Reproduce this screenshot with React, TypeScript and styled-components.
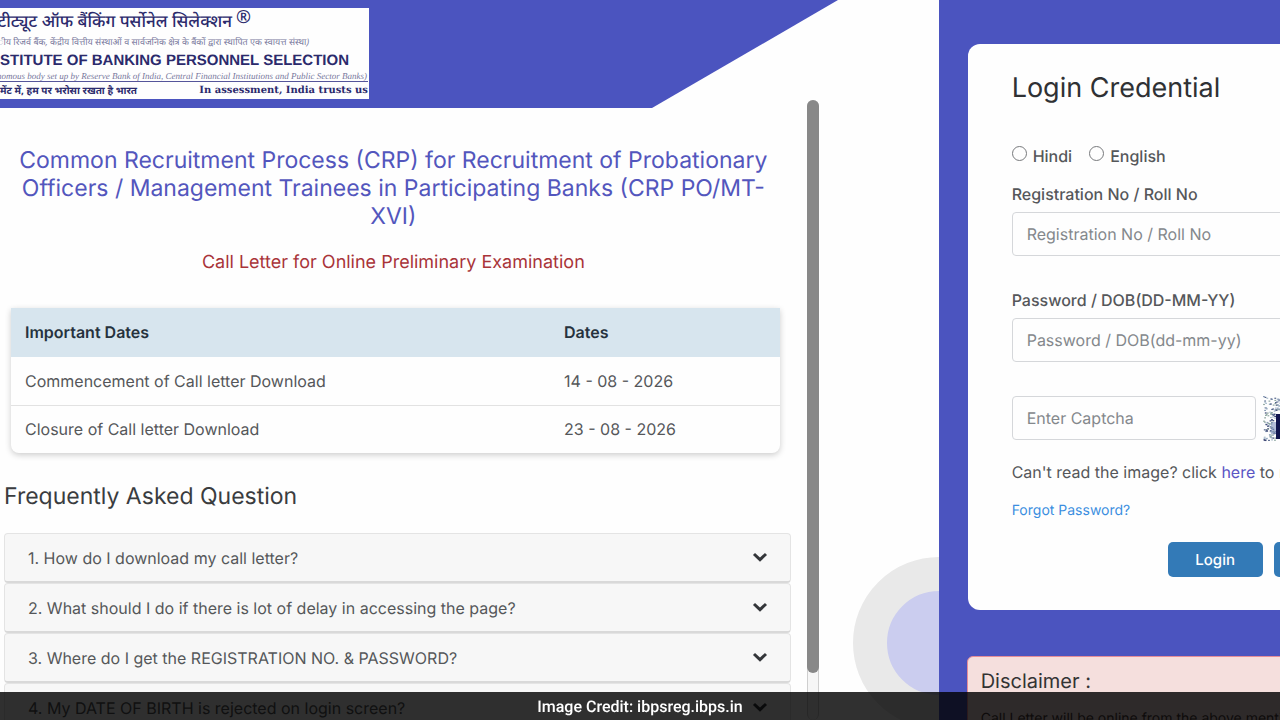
import React from "react";
import styled, { createGlobalStyle } from "styled-components";

const GlobalStyle = createGlobalStyle`
  *, *::before, *::after { box-sizing: border-box; }
  html, body, #root { height: 100%; }
  body {
    margin: 0;
    overflow: hidden;
    background: #fefefe;
    color: #55575a;
    font-family: Inter, "Liberation Sans", sans-serif;
    font-size: 16px;
    line-height: 20px;
    text-rendering: geometricPrecision;
  }
  h1, h2, h3, p { margin: 0; font-weight: 400; }
  button, input { text-rendering: inherit; }
`;

const Page = styled.div`
  display: grid;
  grid-template-columns: minmax(0, 11fr) minmax(0, 4fr);
  height: 100vh;
  overflow: hidden;
`;

const InfoColumn = styled.div`
  position: relative;
  display: flex;
  flex-direction: column;
  overflow: hidden;
`;

const Banner = styled.header`
  flex: none;
  height: 108px;
  padding-top: 8px;
  background: #4b54bf;
  clip-path: polygon(0 0, 838px 0, 652px 100%, 0 100%);
`;

const Logo = styled.div`
  display: flex;
  flex-direction: column;
  align-items: flex-end;
  width: 369px;
  height: 91px;
  overflow: hidden;
  background: #fefefe;
  color: #2b2a6c;
  white-space: nowrap;
`;

const LogoHindiName = styled.div`
  padding-right: 118px;
  font: 500 17px/25px "Noto Sans", "Noto Sans Devanagari", sans-serif;

  sup {
    margin-left: 4px;
    font-size: 18px;
    line-height: 0;
    vertical-align: 4px;
  }
`;

const LogoHindiNote = styled.div`
  padding-right: 60px;
  color: #77779c;
  font: italic 400 9px/17px "Noto Sans", "Noto Sans Devanagari", sans-serif;
`;

const LogoName = styled.div`
  padding-right: 20px;
  font: 700 15px/21px "Liberation Sans", sans-serif;
`;

const LogoNote = styled.div`
  padding-right: 2px;
  color: #77779c;
  font: italic 400 9px/10px "Liberation Serif", serif;
`;

const LogoMotto = styled.div`
  display: flex;
  align-self: stretch;
  justify-content: space-between;
  margin-right: 1px;
  border-top: 1px solid #55559a;
  font: 700 10px/17px "DejaVu Serif", serif;

  span { border-bottom: 1px solid #4b54bf; }
  span:first-child { font: 700 10px/17px "Noto Sans", "Noto Sans Devanagari", sans-serif; }
`;

const InfoBody = styled.div`
  display: flex;
  flex: 1;
  min-height: 0;
  margin-top: -8px;
`;

const InfoMain = styled.main`
  flex: 1;
  min-width: 0;
  padding: 46px 16px 0 4px;
  overflow: hidden;
`;

const ScrollTrack = styled.div`
  flex: none;
  width: 12px;
  margin-right: 120px;
  border: solid #cfcfcf;
  border-width: 0 1px;
  border-radius: 6px;
  background: #f6f6f6;
`;

const ScrollThumb = styled.div`
  height: 573px;
  margin: 0 -1px;
  border-radius: 6px;
  background: #888;
`;

const Rings = styled.div`
  position: absolute;
  top: 557px;
  right: -86px;
  width: 172px;
  height: 172px;
  border: 34px solid #e9e9e9;
  border-radius: 50%;
  background: #cbcdef;
`;

const Title = styled.h1`
  margin-right: 8px;
  color: #5356bd;
  font-size: 23px;
  line-height: 28px;
  text-align: center;
`;

const Subtitle = styled.h2`
  margin: 20px 8px 0 0;
  color: #a93439;
  font-size: 18px;
  line-height: 26px;
  text-align: center;
`;

const TableCard = styled.div`
  margin: 32px 11px 0 7px;
  overflow: hidden;
  border-radius: 0 0 8px 8px;
  box-shadow: 0 2px 6px rgba(0, 0, 0, 0.2);
`;

const DatesTable = styled.table`
  width: 100%;
  border-collapse: collapse;
  table-layout: fixed;

  th, td {
    height: 48px;
    padding: 0 14px;
    text-align: left;
  }
  th {
    height: 49px;
    padding-bottom: 2px;
    background: #d7e5ee;
    color: #26323d;
    font-weight: 600;
  }
  th:first-child { width: 70%; }
  th:last-child, td:last-child { padding-left: 15px; }
  tr + tr td { border-top: 1px solid #e2e2e2; }
`;

const SectionHeading = styled.h2`
  margin: 29px 0 23px;
  color: #3a3c3f;
  font-size: 23px;
  line-height: 28px;
`;

const FaqList = styled.div`
  display: flex;
  flex-direction: column;
`;

const FaqItem = styled.button`
  display: flex;
  flex: none;
  align-items: center;
  justify-content: space-between;
  height: 50px;
  padding: 0 22px 0 23px;
  border: 1px solid #e4e4e4;
  border-bottom: 2px solid #d9d9d9;
  border-radius: 4px;
  background: #f7f7f7;
  color: inherit;
  font: inherit;
  text-align: left;
`;

const LoginColumn = styled.aside`
  overflow: hidden;
  padding: 44px 0 0 29px;
  background: #4b54bf;
`;

const LoginCard = styled.form`
  width: 440px;
  height: 566px;
  padding: 28px 44px 0;
  border-radius: 12px;
  background: #fefefe;
`;

const LoginHeading = styled.h2`
  color: #2f3134;
  font-size: 27px;
  line-height: 32px;
`;

const LanguageRow = styled.div`
  display: flex;
  gap: 17px;
  margin-top: 42px;
`;

const RadioLabel = styled.label`
  display: flex;
  gap: 6px;
  font-weight: 500;
`;

const Radio = styled.input`
  width: 15px;
  height: 15px;
  margin: 0;
  appearance: none;
  border: 1px solid #77797c;
  border-radius: 50%;
  background: #fefefe;
`;

const FieldLabel = styled.label<{ $gap: number }>`
  display: block;
  margin: ${(p) => p.$gap}px 0 8px;
  font-weight: 500;
`;

const TextField = styled.input<{ $width?: string }>`
  display: block;
  width: ${(p) => p.$width ?? "100%"};
  height: 44px;
  padding: 0 14px;
  border: 1px solid #d5d7da;
  border-radius: 4px;
  background: #fefefe;
  color: #55575a;
  font: inherit;

  &::placeholder { color: #84888c; opacity: 1; }
`;

const CaptchaRow = styled.div`
  display: flex;
  gap: 7px;
  margin-top: 34px;
`;

const CaptchaHelp = styled.p`
  margin-top: 20px;
  white-space: nowrap;

  a { color: #5a55c4; text-decoration: none; }
`;

const ForgotLink = styled.a`
  display: block;
  margin-top: 19px;
  color: #3b8ee0;
  font-size: 14px;
  text-decoration: none;
`;

const ButtonRow = styled.div`
  display: flex;
  gap: 11px;
  margin: 21px 0 0 156px;
`;

const ActionButton = styled.button`
  flex: none;
  width: 95px;
  height: 35px;
  border: 0;
  border-radius: 5px;
  background: #337ab7;
  color: #fff;
  font: 500 15px/20px Inter, sans-serif;
`;

const DisclaimerCard = styled.section`
  width: 440px;
  height: 140px;
  margin: 46px 0 0 -1px;
  padding: 12px 13px;
  border: 1px solid #e58d98;
  border-radius: 6px;
  background: #f5dfdd;
  color: #4c3c3c;
`;

const DisclaimerHeading = styled.h2`
  margin-bottom: 16px;
  color: #333;
  font-size: 20px;
  line-height: 24px;
`;

const DisclaimerText = styled.p`
  font-size: 14px;
`;

const Credit = styled.footer`
  position: fixed;
  right: 0;
  bottom: 0;
  left: 0;
  height: 28px;
  background: rgba(0, 0, 0, 0.81);
  color: #fff;
  font: 500 16px/29px Roboto, sans-serif;
  text-align: center;
`;

const dates = [
  ["Commencement of Call letter Download", "14 - 08 - 2026"],
  ["Closure of Call letter Download", "23 - 08 - 2026"],
];

const questions = [
  "1. How do I download my call letter?",
  "2. What should I do if there is lot of delay in accessing the page?",
  "3. Where do I get the REGISTRATION NO. & PASSWORD?",
  "4. My DATE OF BIRTH is rejected on login screen?",
];

const Chevron = () => (
  <svg width="16" height="12" viewBox="0 0 16 12" fill="none" aria-hidden="true">
    <path d="M2 2 8 7.6 14 2" stroke="#34363a" strokeWidth="3" />
  </svg>
);

const speckColors = ["#8c9fb8", "#56678c", "#a9bccb", "#3d4775", "#8fa7a0"];

const specks = Array.from({ length: 900 }, (_, i) => {
  const a = Math.abs(Math.sin(i * 12.9898) * 43758.5453) % 1;
  const b = Math.abs(Math.sin(i * 78.233) * 24634.6345) % 1;
  return { x: a * 100, y: b * 44, fill: speckColors[i % speckColors.length] };
});

const Captcha = () => (
  <svg width="100" height="46" viewBox="0 0 100 46" role="img" aria-label="Captcha">
    {specks.map((s, i) => (
      <rect key={i} x={s.x} y={s.y} width="1.8" height="1.2" fill={s.fill} />
    ))}
    <path d="M13 18h10v25H13z" fill="#12164f" />
    <path d="M8 26h5v12H8z" fill="#6a7cb4" opacity=".5" />
  </svg>
);

export default function App() {
  return (
    <Page>
      <GlobalStyle />
      <InfoColumn>
        <Banner>
          <Logo>
            <LogoHindiName>
              टीट्यूट ऑफ बैंकिंग पर्सोनेल सिलेक्शन<sup>®</sup>
            </LogoHindiName>
            <LogoHindiNote>
              ीय रिजर्व बैंक, केंद्रीय वित्तीय संस्थाओं व सार्वजनिक क्षेत्र के बैंकों द्वारा स्थापित एक स्वायत्त संस्था)
            </LogoHindiNote>
            <LogoName>STITUTE OF BANKING PERSONNEL SELECTION</LogoName>
            <LogoNote>
              utonomous body set up by Reserve Bank of India, Central Financial Institutions and Public Sector Banks)
            </LogoNote>
            <LogoMotto>
              <span>मेंट में, हम पर भरोसा रखता है भारत</span>
              <span>In assessment, India trusts us</span>
            </LogoMotto>
          </Logo>
        </Banner>
        <InfoBody>
          <InfoMain>
            <Title>
              Common Recruitment Process (CRP) for Recruitment of Probationary Officers / Management
              Trainees in Participating Banks (CRP PO/MT-XVI)
            </Title>
            <Subtitle>Call Letter for Online Preliminary Examination</Subtitle>
            <TableCard>
              <DatesTable>
                <thead>
                  <tr>
                    <th>Important Dates</th>
                    <th>Dates</th>
                  </tr>
                </thead>
                <tbody>
                  {dates.map(([event, date]) => (
                    <tr key={event}>
                      <td>{event}</td>
                      <td>{date}</td>
                    </tr>
                  ))}
                </tbody>
              </DatesTable>
            </TableCard>
            <SectionHeading>Frequently Asked Question</SectionHeading>
            <FaqList>
              {questions.map((q) => (
                <FaqItem key={q} type="button">
                  {q}
                  <Chevron />
                </FaqItem>
              ))}
            </FaqList>
          </InfoMain>
          <ScrollTrack>
            <ScrollThumb />
          </ScrollTrack>
        </InfoBody>
        <Rings />
      </InfoColumn>
      <LoginColumn>
        <LoginCard>
          <LoginHeading>Login Credential</LoginHeading>
          <LanguageRow>
            <RadioLabel>
              <Radio type="radio" name="language" />
              Hindi
            </RadioLabel>
            <RadioLabel>
              <Radio type="radio" name="language" />
              English
            </RadioLabel>
          </LanguageRow>
          <FieldLabel $gap={18} htmlFor="registration">Registration No / Roll No</FieldLabel>
          <TextField id="registration" placeholder="Registration No / Roll No" />
          <FieldLabel $gap={34} htmlFor="password">Password / DOB(DD-MM-YY)</FieldLabel>
          <TextField id="password" placeholder="Password / DOB(dd-mm-yy)" />
          <CaptchaRow>
            <TextField $width="244px" aria-label="Captcha" placeholder="Enter Captcha" />
            <Captcha />
          </CaptchaRow>
          <CaptchaHelp>
            Can't read the image? click <a href="#captcha">here</a> to refresh
          </CaptchaHelp>
          <ForgotLink href="#forgot">Forgot Password?</ForgotLink>
          <ButtonRow>
            <ActionButton type="button">Login</ActionButton>
            <ActionButton type="reset" aria-label="Reset" />
          </ButtonRow>
        </LoginCard>
        <DisclaimerCard>
          <DisclaimerHeading>Disclaimer :</DisclaimerHeading>
          <DisclaimerText>Call Letter will be online from the above mentioned dates</DisclaimerText>
        </DisclaimerCard>
      </LoginColumn>
      <Credit>Image Credit: ibpsreg.ibps.in</Credit>
    </Page>
  );
}
